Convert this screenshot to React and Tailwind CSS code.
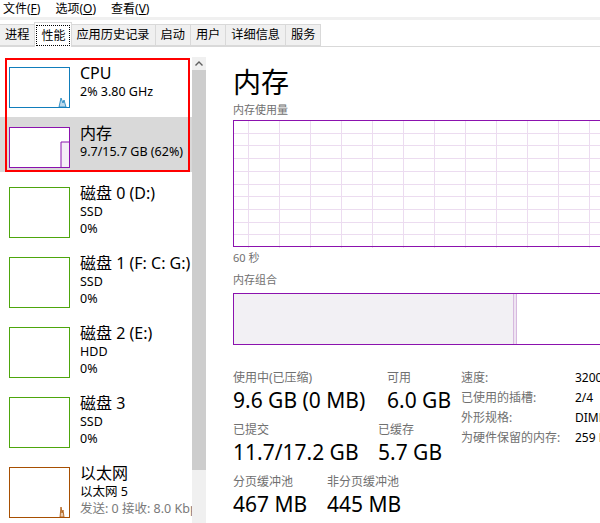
import { useState } from "react";

const font = { fontFamily: '"Noto Sans", "Noto Sans CJK SC", sans-serif' };

// 左边列表的缩略图
function Thumb({ color, tall, children }) {
    return (
        <svg width="61" height={tall ? 51 : 41} className="shrink-0 block">
            <rect x="0.5" y="0.5" width="60" height={tall ? 50 : 40} fill="white" stroke={color} />
            {children}
        </svg>
    );
}

function SideItem({ thumb, title, lines, selected, h }) {
    return (
        <div className={`flex pt-[10px] pl-[9px] gap-[10px] ${h} ${selected ? "bg-[#d9d9d9]" : ""}`}>
            {thumb}
            <div className="flex flex-col whitespace-nowrap">
                <div className="text-[16px] leading-[20px] text-black -mt-[4px]">{title}</div>
                {lines.map((l, i) => (
                    <div key={i} className={`text-[12.5px] leading-[17px] ${l.gray ? "text-[#7a7a7a]" : "text-black"}`}>{l.text}</div>
                ))}
            </div>
        </div>
    );
}

const tabs = ["进程", "性能", "应用历史记录", "启动", "用户", "详细信息", "服务"];

export default function App() {
    const [tab] = useState(1);
    const disk = "#4da60c";
    const vLines = Array.from({ length: 13 }, (_, i) => 15 + i * 31);
    const hLines = Array.from({ length: 9 }, (_, i) => 12.7 * (i + 1));

    return (
        <div className="w-[600px] h-[523px] overflow-hidden bg-white relative flex flex-col" style={font}>
            {/* 菜单 */}
            <div className="h-[17px] flex items-center gap-[15px] pl-[3px] text-[12px] text-black shrink-0">
                <span>文件(<u>F</u>)</span>
                <span>选项(<u>O</u>)</span>
                <span>查看(<u>V</u>)</span>
            </div>
            <div className="h-[3px] bg-[#f0f0f0] shrink-0"></div>
            {/* 标签页 */}
            <div className="h-[27px] flex items-end border-b border-[#d9d9d9] shrink-0">
                {tabs.map((t, i) =>
                    i === tab ? (
                        <div key={t} className="h-[25px] px-[1px] pt-[2px] bg-white border border-b-0 border-[#d9d9d9] -mb-[1px] -mx-[1px] relative z-10">
                            <div className="h-[21px] px-[4px] border border-dotted border-black text-[12px] leading-[19px]">{t}</div>
                        </div>
                    ) : (
                        <div key={t} className="h-[22px] px-[5px] bg-[#f0f0f0] border border-[#d9d9d9] border-l-0 text-[12.2px] leading-[20px]">{t}</div>
                    )
                )}
            </div>

            <div className="flex flex-1 min-h-0 pt-[10px]">
                {/* 左侧列表 */}
                <div className="w-[192px] shrink-0 overflow-hidden">
                    <SideItem h="h-[60px]" title="CPU" lines={[{ text: "2% 3.80 GHz" }]}
                        thumb={<Thumb color="#117dbb">
                            <path d="M50 40 L52 31 L54 36 L55 33 L57 40 Z" fill="#bcd9ec" stroke="#117dbb" strokeWidth="0.8" />
                        </Thumb>} />
                    <SideItem h="h-[55px] mb-[5px]" selected title="内存" lines={[{ text: "9.7/15.7 GB (62%)" }]}
                        thumb={<Thumb color="#8b12ae">
                            <rect x="52" y="15" width="8" height="25" fill="#f4eef6" />
                            <path d="M52 40 L52 15 L60 15" fill="none" stroke="#8b12ae" strokeWidth="1" />
                        </Thumb>} />
                    <SideItem h="h-[70px]" title="磁盘 0 (D:)" lines={[{ text: "SSD" }, { text: "0%" }]} thumb={<Thumb color={disk} tall />} />
                    <SideItem h="h-[70px]" title="磁盘 1 (F: C: G:)" lines={[{ text: "SSD" }, { text: "0%" }]} thumb={<Thumb color={disk} tall />} />
                    <SideItem h="h-[70px]" title="磁盘 2 (E:)" lines={[{ text: "HDD" }, { text: "0%" }]} thumb={<Thumb color={disk} tall />} />
                    <SideItem h="h-[70px]" title="磁盘 3" lines={[{ text: "SSD" }, { text: "0%" }]} thumb={<Thumb color={disk} tall />} />
                    <SideItem h="h-[70px]" title="以太网" lines={[{ text: "以太网 5" }, { text: "发送: 0 接收: 8.0 Kbps", gray: true }]}
                        thumb={<Thumb color="#a74f01" tall>
                            <path d="M51 50 L52 40 L53 46 L54 43 L55 50 Z" fill="#e8c9ad" stroke="#a74f01" strokeWidth="0.8" />
                        </Thumb>} />
                </div>
                {/* 滚动条 */}
                <div className="w-[14px] shrink-0 bg-[#f0f0f0] flex flex-col">
                    <div className="h-[13px] flex items-center justify-center">
                        <svg width="8" height="5" viewBox="0 0 8 5"><path d="M0.5 4.5 L4 1 L7.5 4.5" fill="none" stroke="#606060" strokeWidth="1.4" /></svg>
                    </div>
                    <div className="h-[400px] bg-[#cdcdcd]"></div>
                </div>

                {/* 右侧详情 */}
                <div className="flex-1 min-w-0 overflow-hidden pl-[27px] -mt-[10px] pt-[17px] whitespace-nowrap">
                    <div className="text-[28px] leading-[36px] text-black">内存</div>
                    <div className="text-[11px] leading-[16px] text-[#707070] mt-[2px]">内存使用量</div>
                    <svg width="420" height="128" className="block mt-[2px]">
                        {vLines.map((x) => <line key={x} x1={x + 0.5} y1="0" x2={x + 0.5} y2="128" stroke="#ecdcf0" />)}
                        {hLines.map((y) => <line key={y} x1="0" y1={Math.round(y) + 0.5} x2="420" y2={Math.round(y) + 0.5} stroke="#ecdcf0" />)}
                        <rect x="0.5" y="0.5" width="419" height="126" fill="none" stroke="#8b12ae" />
                    </svg>
                    <div className="text-[11px] leading-[16px] text-[#707070] mt-[2px]">60 秒</div>
                    <div className="text-[11px] leading-[16px] text-[#707070] mt-[6px]">内存组合</div>
                    <div className="w-[420px] h-[52px] border border-[#8b12ae] mt-[5px] flex">
                        <div className="w-[279px] bg-[#f2f0f4]"></div>
                        <div className="w-[4px] border-x border-[#d7b9df] bg-[#efe4f2]"></div>
                        <div className="flex-1 bg-white"></div>
                    </div>

                    <div className="flex mt-[25px]">
                        <div className="w-[228px] shrink-0">
                            <div className="flex h-[52px]">
                                <div className="w-[154px]">
                                    <div className="text-[12px] leading-[16px] text-[#707070]">使用中(已压缩)</div>
                                    <div className="text-[21px] leading-[28px] text-black">9.6 GB (0 MB)</div>
                                </div>
                                <div>
                                    <div className="text-[12px] leading-[16px] text-[#707070]">可用</div>
                                    <div className="text-[21px] leading-[28px] text-black">6.0 GB</div>
                                </div>
                            </div>
                            <div className="flex h-[52px]">
                                <div className="w-[145px]">
                                    <div className="text-[12px] leading-[16px] text-[#707070]">已提交</div>
                                    <div className="text-[21px] leading-[28px] text-black">11.7/17.2 GB</div>
                                </div>
                                <div>
                                    <div className="text-[12px] leading-[16px] text-[#707070]">已缓存</div>
                                    <div className="text-[21px] leading-[28px] text-black">5.7 GB</div>
                                </div>
                            </div>
                            <div className="flex h-[52px]">
                                <div className="w-[94px]">
                                    <div className="text-[12px] leading-[16px] text-[#707070]">分页缓冲池</div>
                                    <div className="text-[21px] leading-[28px] text-black">467 MB</div>
                                </div>
                                <div>
                                    <div className="text-[12px] leading-[16px] text-[#707070]">非分页缓冲池</div>
                                    <div className="text-[21px] leading-[28px] text-black">445 MB</div>
                                </div>
                            </div>
                        </div>
                        <div className="grid grid-cols-[114px_auto] auto-rows-[20px] text-[12px] leading-[16px]">
                            <div className="text-[#707070]">速度:</div><div>3200 MHz</div>
                            <div className="text-[#707070]">已使用的插槽:</div><div>2/4</div>
                            <div className="text-[#707070]">外形规格:</div><div>DIMM</div>
                            <div className="text-[#707070]">为硬件保留的内存:</div><div>259 MB</div>
                        </div>
                    </div>
                </div>
            </div>

            {/* 红框标注 */}
            <div className="absolute left-[5px] top-[58px] w-[185px] h-[114px] border-2 border-[#ff0000] pointer-events-none"></div>
        </div>
    );
}
